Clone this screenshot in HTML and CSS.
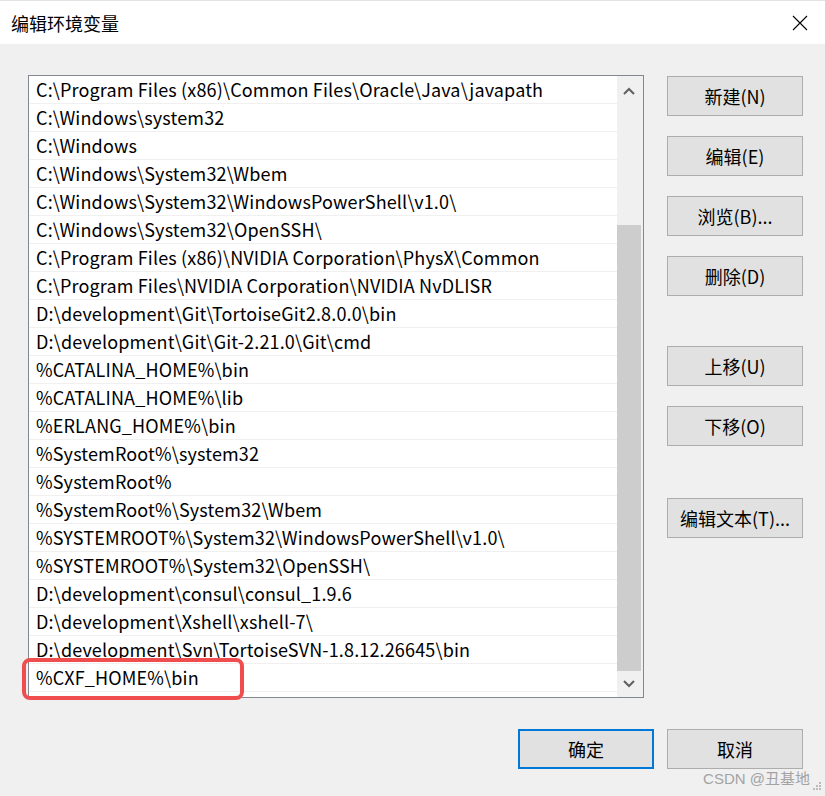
FILE: index.html
```html
<!DOCTYPE html>
<html lang="zh-CN">
<head>
    <meta charset="UTF-8">
    <title>编辑环境变量</title>
    <link rel="stylesheet" href="styles.css">
</head>
<body>
    <div class="dialog">
        <!-- 标题栏 -->
        <div class="titlebar">
            <span class="title">编辑环境变量</span>
            <svg class="close" width="16" height="16" viewBox="0 0 16 16">
                <path d="M1 1 L15 15 M15 1 L1 15" stroke="#000" stroke-width="1.1" fill="none"/>
            </svg>
        </div>

        <div class="content">
            <div class="path-list">
                <div class="rows">
                    <div class="row">C:\Program Files (x86)\Common Files\Oracle\Java\javapath</div>
                    <div class="row">C:\Windows\system32</div>
                    <div class="row">C:\Windows</div>
                    <div class="row">C:\Windows\System32\Wbem</div>
                    <div class="row">C:\Windows\System32\WindowsPowerShell\v1.0\</div>
                    <div class="row">C:\Windows\System32\OpenSSH\</div>
                    <div class="row">C:\Program Files (x86)\NVIDIA Corporation\PhysX\Common</div>
                    <div class="row">C:\Program Files\NVIDIA Corporation\NVIDIA NvDLISR</div>
                    <div class="row">D:\development\Git\TortoiseGit2.8.0.0\bin</div>
                    <div class="row">D:\development\Git\Git-2.21.0\Git\cmd</div>
                    <div class="row">%CATALINA_HOME%\bin</div>
                    <div class="row">%CATALINA_HOME%\lib</div>
                    <div class="row">%ERLANG_HOME%\bin</div>
                    <div class="row">%SystemRoot%\system32</div>
                    <div class="row">%SystemRoot%</div>
                    <div class="row">%SystemRoot%\System32\Wbem</div>
                    <div class="row">%SYSTEMROOT%\System32\WindowsPowerShell\v1.0\</div>
                    <div class="row">%SYSTEMROOT%\System32\OpenSSH\</div>
                    <div class="row">D:\development\consul\consul_1.9.6</div>
                    <div class="row">D:\development\Xshell\xshell-7\</div>
                    <div class="row">D:\development\Svn\TortoiseSVN-1.8.12.26645\bin</div>
                    <div class="row">%CXF_HOME%\bin<span class="mark"></span></div>
                </div>
                <!-- 滚动条 -->
                <div class="scrollbar">
                    <div class="arrow up">
                        <svg width="12" height="8" viewBox="0 0 12 8"><path d="M1 7 L6 2 L11 7" stroke="#606060" stroke-width="2" fill="none"/></svg>
                    </div>
                    <div class="track"></div>
                    <div class="thumb"></div>
                    <div class="arrow down">
                        <svg width="12" height="8" viewBox="0 0 12 8"><path d="M1 1 L6 6 L11 1" stroke="#606060" stroke-width="2" fill="none"/></svg>
                    </div>
                </div>
            </div>

            <div class="actions">
                <div class="btn-group">
                    <button class="btn">新建(N)</button>
                    <button class="btn">编辑(E)</button>
                    <button class="btn">浏览(B)...</button>
                    <button class="btn">删除(D)</button>
                </div>
                <div class="btn-group">
                    <button class="btn">上移(U)</button>
                    <button class="btn">下移(O)</button>
                </div>
                <div class="btn-group">
                    <button class="btn">编辑文本(T)...</button>
                </div>
            </div>
        </div>

        <div class="footer">
            <button class="btn primary">确定</button>
            <button class="btn">取消</button>
        </div>

        <div class="watermark">CSDN @丑基地</div>
        <svg class="grip" width="9" height="9" viewBox="0 0 9 9">
            <rect x="6" y="0" width="2" height="2" fill="#bcbcbc"/>
            <rect x="3" y="3" width="2" height="2" fill="#bcbcbc"/>
            <rect x="6" y="3" width="2" height="2" fill="#bcbcbc"/>
            <rect x="0" y="6" width="2" height="2" fill="#bcbcbc"/>
            <rect x="3" y="6" width="2" height="2" fill="#bcbcbc"/>
            <rect x="6" y="6" width="2" height="2" fill="#bcbcbc"/>
        </svg>
    </div>
</body>
</html>
```

FILE: styles.css
```css
:root {
    --face: #f0f0f0;
    --btn-face: #e1e1e1;
    --btn-border: #adadad;
    --mark: #f04e4e;
}

body {
    margin: 0;
    background: var(--face);
    font-family: "Noto Sans CJK SC", "Noto Sans", sans-serif;
    color: #000;
}

.dialog {
    position: relative;
    width: 825px;
    height: 796px;
    overflow: hidden;
}

.titlebar {
    height: 43px;
    border-top: 1px solid #e3e3e3;
    background: #fff;
    display: flex;
    align-items: center;
    justify-content: space-between;
    padding: 0 17px 0 11px;
}

.title {
    font-size: 18px;
}

.content {
    display: flex;
    gap: 23px;
    padding: 31px 0 0 28px;
}

.path-list {
    width: 614px;
    height: 621px;
    border: 1px solid #828790;
    background: #fff;
    display: flex;
}

.rows {
    flex: 1;
}

.row {
    position: relative;
    height: 27px;
    border-bottom: 1px solid #f0f0f0;
    padding-left: 7px;
    font-size: 18px;
    letter-spacing: 0.15px;
    line-height: 27px;
    white-space: nowrap;
}

/* 红框标注 */
.mark {
    position: absolute;
    left: -7px;
    top: -6px;
    width: 214px;
    height: 34px;
    border: 4px solid var(--mark);
    border-radius: 8px;
}

.scrollbar {
    width: 26px;
    background: var(--face);
    display: flex;
    flex-direction: column;
}

.arrow {
    display: flex;
    align-items: center;
    justify-content: center;
    padding-right: 2px;
}

.arrow.up {
    height: 30px;
}

.arrow.down {
    height: 26px;
}

.track {
    height: 119px;
}

.thumb {
    height: 446px;
    width: 24px;
    background: #cdcdcd;
}

.actions {
    display: flex;
    flex-direction: column;
    gap: 50px;
    padding-top: 1px;
}

.btn-group {
    display: flex;
    flex-direction: column;
    gap: 20px;
}

.btn-group:last-child {
    margin-top: 2px;
}

.btn {
    width: 136px;
    height: 40px;
    background: var(--btn-face);
    border: 1px solid var(--btn-border);
    font-family: inherit;
    font-size: 18px;
    color: #000;
    padding: 0;
}

.btn.primary {
    border: 2px solid #0078d7;
}

.footer {
    display: flex;
    justify-content: flex-end;
    gap: 13px;
    padding: 31px 22px 0 0;
}

.watermark {
    position: absolute;
    right: 15px;
    bottom: 8px;
    font-family: "Liberation Sans", "Noto Sans CJK SC", sans-serif;
    font-size: 15px;
    color: #a3a3a3;
}

.grip {
    position: absolute;
    right: 3px;
    bottom: 5px;
}
```
